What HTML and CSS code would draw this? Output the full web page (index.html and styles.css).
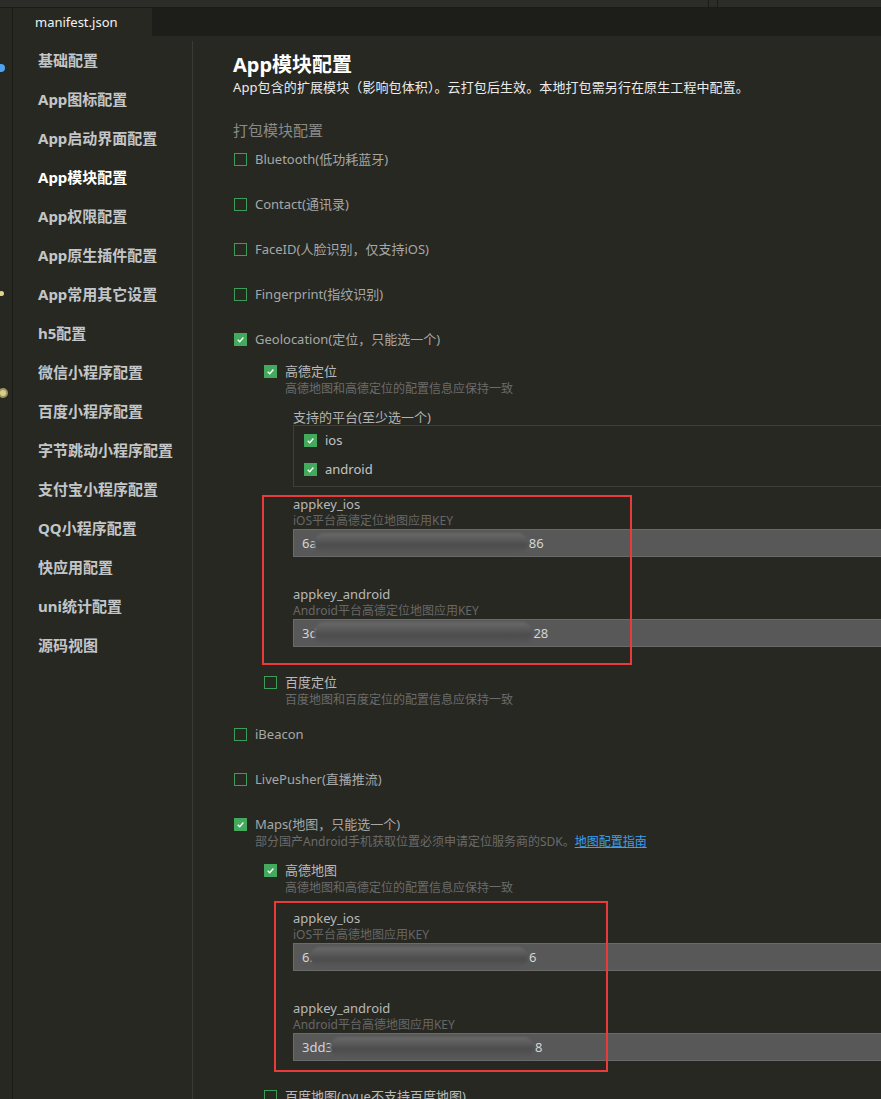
FILE: index.html
```html
<!DOCTYPE html>
<html lang="zh-CN">
<head>
    <meta charset="UTF-8">
    <title>manifest.json - App模块配置</title>
    <link rel="stylesheet" href="styles.css">
</head>
<body>
<div class="window">
    <div class="titlebar">
        <span class="seg seg-left"></span>
        <span class="seg seg-right"></span>
    </div>
    <div class="frame">
        <aside class="gutter">
            <span class="dot dot-blue"></span>
            <span class="dot dot-small"></span>
            <span class="dot dot-warn"></span>
        </aside>
        <div class="editor">
            <div class="tabs">
                <div class="tab active">manifest.json</div>
            </div>
            <div class="workspace">
                <nav class="sidebar">
                    <a class="nav-item">基础配置</a>
                    <a class="nav-item">App图标配置</a>
                    <a class="nav-item">App启动界面配置</a>
                    <a class="nav-item active">App模块配置</a>
                    <a class="nav-item">App权限配置</a>
                    <a class="nav-item">App原生插件配置</a>
                    <a class="nav-item">App常用其它设置</a>
                    <a class="nav-item">h5配置</a>
                    <a class="nav-item">微信小程序配置</a>
                    <a class="nav-item">百度小程序配置</a>
                    <a class="nav-item">字节跳动小程序配置</a>
                    <a class="nav-item">支付宝小程序配置</a>
                    <a class="nav-item">QQ小程序配置</a>
                    <a class="nav-item">快应用配置</a>
                    <a class="nav-item">uni统计配置</a>
                    <a class="nav-item">源码视图</a>
                </nav>

                <main class="panel">
                    <h1>App模块配置</h1>
                    <p class="lead">App包含的扩展模块（影响包体积）。云打包后生效。本地打包需另行在原生工程中配置。</p>
                    <h3 class="group-title">打包模块配置</h3>

                    <div class="module">
                        <label class="check"><span class="box"></span>Bluetooth(低功耗蓝牙)</label>
                    </div>
                    <div class="module">
                        <label class="check"><span class="box"></span>Contact(通讯录)</label>
                    </div>
                    <div class="module">
                        <label class="check"><span class="box"></span>FaceID(人脸识别，仅支持iOS)</label>
                    </div>
                    <div class="module">
                        <label class="check"><span class="box"></span>Fingerprint(指纹识别)</label>
                    </div>

                    <div class="module">
                        <label class="check"><span class="box on"><svg viewBox="0 0 13 13"><polyline points="3.2,6.8 5.6,9.1 9.9,4.2"/></svg></span>Geolocation(定位，只能选一个)</label>
                        <div class="sub">
                            <label class="check sub-check"><span class="box on"><svg viewBox="0 0 13 13"><polyline points="3.2,6.8 5.6,9.1 9.9,4.2"/></svg></span>高德定位</label>
                            <p class="desc">高德地图和高德定位的配置信息应保持一致</p>

                            <div class="platforms">
                                <div class="platforms-title">支持的平台(至少选一个)</div>
                                <div class="platforms-box">
                                    <label class="check plat"><span class="box on"><svg viewBox="0 0 13 13"><polyline points="3.2,6.8 5.6,9.1 9.9,4.2"/></svg></span>ios</label>
                                    <label class="check plat"><span class="box on"><svg viewBox="0 0 13 13"><polyline points="3.2,6.8 5.6,9.1 9.9,4.2"/></svg></span>android</label>
                                </div>
                            </div>

                            <div class="keys keys-geo">
                                <span class="mark mark-geo"></span>
                                <div class="field">
                                    <div class="field-label">appkey_ios</div>
                                    <div class="field-desc">iOS平台高德定位地图应用KEY</div>
                                    <div class="input">6a<span class="smudge smudge-1"></span>86</div>
                                </div>
                                <div class="field">
                                    <div class="field-label">appkey_android</div>
                                    <div class="field-desc">Android平台高德定位地图应用KEY</div>
                                    <div class="input">3d<span class="smudge smudge-2"></span>28</div>
                                </div>
                            </div>

                            <label class="check sub-check gap-top"><span class="box"></span>百度定位</label>
                            <p class="desc">百度地图和百度定位的配置信息应保持一致</p>
                        </div>
                    </div>

                    <div class="module after-sub">
                        <label class="check"><span class="box"></span>iBeacon</label>
                    </div>
                    <div class="module">
                        <label class="check"><span class="box"></span>LivePusher(直播推流)</label>
                    </div>

                    <div class="module">
                        <label class="check"><span class="box on"><svg viewBox="0 0 13 13"><polyline points="3.2,6.8 5.6,9.1 9.9,4.2"/></svg></span>Maps(地图，只能选一个)</label>
                        <p class="desc module-desc">部分国产Android手机获取位置必须申请定位服务商的SDK。<a class="link">地图配置指南</a></p>
                        <div class="sub sub-maps">
                            <label class="check sub-check"><span class="box on"><svg viewBox="0 0 13 13"><polyline points="3.2,6.8 5.6,9.1 9.9,4.2"/></svg></span>高德地图</label>
                            <p class="desc">高德地图和高德定位的配置信息应保持一致</p>

                            <div class="keys keys-maps">
                                <span class="mark mark-maps"></span>
                                <div class="field">
                                    <div class="field-label">appkey_ios</div>
                                    <div class="field-desc">iOS平台高德地图应用KEY</div>
                                    <div class="input">6.<span class="smudge smudge-3"></span>6</div>
                                </div>
                                <div class="field">
                                    <div class="field-label">appkey_android</div>
                                    <div class="field-desc">Android平台高德地图应用KEY</div>
                                    <div class="input">3dd3<span class="smudge smudge-4"></span>8</div>
                                </div>
                            </div>

                            <label class="check sub-check gap-top"><span class="box"></span>百度地图(nvue不支持百度地图)</label>
                        </div>
                    </div>
                </main>
            </div>
        </div>
    </div>
</div>
</body>
</html>
```

FILE: styles.css
```css
* { box-sizing: border-box; }
html, body { margin: 0; height: 100%; overflow: hidden; }
body { background: #272822; color: #c8c8c8; font-family: "Noto Sans", "Noto Sans CJK SC", sans-serif; font-size: 13px; }

.window { height: 100vh; display: flex; flex-direction: column; }
.titlebar { height: 8px; background: #2c2d28; border-bottom: 1px solid #1b1c18; display: flex; flex-shrink: 0; }
.seg { height: 7px; }
.seg-left { width: 709px; border-right: 1px solid #1b1c18; }
.seg-right { margin-left: 8px; flex: 1; border-left: 1px solid #1b1c18; }

.frame { flex: 1; display: flex; min-height: 0; }
.gutter { width: 13px; flex-shrink: 0; border-right: 1px solid #1b1c18; position: relative; }
.dot { position: absolute; border-radius: 50%; }
.dot-blue { width: 8px; height: 8px; left: -3px; top: 56px; background: #4ea4f2; }
.dot-small { width: 5px; height: 5px; left: -1px; top: 283px; background: #e2d58c; }
.dot-warn { width: 10px; height: 10px; left: -2px; top: 380px; background: #d8cd8a; border: 2px solid #9c9460; }

.editor { flex: 1; display: flex; flex-direction: column; min-width: 0; }
.tabs { height: 28px; background: #1d1e1a; display: flex; flex-shrink: 0; }
.tab { width: 139px; padding-left: 22px; line-height: 28px; font-size: 13px; color: #f2f2f2; background: #272822; }

.workspace { flex: 1; display: flex; min-height: 0; }
.sidebar { width: 180px; flex-shrink: 0; margin-top: 5px; padding-top: 9px; border-right: 1px solid #3a3b35; display: flex; flex-direction: column; gap: 19px; }
.nav-item { padding-left: 25px; line-height: 20px; font-size: 15px; font-weight: bold; color: #c3c6c8; }
.nav-item.active { color: #ffffff; }

.panel { flex: 1; overflow: hidden; padding: 16px 0 0 40px; }
.panel h1 { margin: 0; font-size: 20px; line-height: 26px; font-weight: bold; color: #ffffff; }
.lead { margin: 0; line-height: 18px; color: #ececec; white-space: nowrap; letter-spacing: 0.1px; }
.group-title { margin: 24px 0 9px; font-size: 15px; line-height: 20px; font-weight: normal; color: #8a8a8a; }

.module { margin-bottom: 25px; width: 760px; }
.module.after-sub { margin-top: -9px; }
.check { display: flex; align-items: center; line-height: 20px; color: #a6a7a7; white-space: nowrap; }
.box { width: 13px; height: 13px; margin: 0 8px 0 1px; border: 1px solid #3d9c55; flex-shrink: 0; display: flex; }
.box.on { background: #42a95d; border-color: #42a95d; }
.box svg { width: 11px; height: 11px; }
.box polyline { fill: none; stroke: #ffffff; stroke-width: 1.6; }

.sub { margin: 12px 0 0 30px; }
.sub-maps { margin-top: 10px; }
.sub-check { color: #bababa; }
.gap-top { margin-top: 25px; }
.desc { margin: 0; padding-left: 22px; font-size: 12px; line-height: 16px; color: #6b6b6b; white-space: nowrap; }
.module-desc { padding-left: 22px; }
.link { color: #3d9fea; text-decoration: underline; }

.platforms { margin: 12px 0 0 30px; }
.platforms-title { line-height: 16px; color: #b2b2b2; }
.platforms-box { border: 1px solid #3f403a; padding: 4px 0 7px 9px; display: flex; flex-direction: column; gap: 9px; }
.plat { color: #c4c4c4; }

.keys { position: relative; margin-left: 30px; margin-top: 8px; display: flex; flex-direction: column; gap: 28px; }
.keys-maps { margin-top: 13px; }
.mark { position: absolute; border: 2px solid #ea3b3b; pointer-events: none; }
.mark-geo { left: -31px; top: 0; width: 370px; height: 170px; }
.mark-maps { left: -19px; top: -8px; width: 334px; height: 171px; }
.field-label { line-height: 18px; color: #b8b8b8; }
.field-desc { font-size: 12px; line-height: 16px; color: #676767; }
.input { height: 28px; border: 1px solid #6a6a6a; background: #585858; padding-left: 8px; color: #d4d4d4; display: flex; align-items: center; white-space: nowrap; }

.smudge { display: inline-block; height: 20px; margin: 0 1px 0 -3px; border-radius: 10px; background: linear-gradient(#6a6a6a, #4c4c4c 60%, #585858); filter: blur(1px); }
.smudge-1 { width: 214px; }
.smudge-2 { width: 218px; height: 22px; }
.smudge-3 { width: 218px; }
.smudge-4 { width: 204px; }
```
